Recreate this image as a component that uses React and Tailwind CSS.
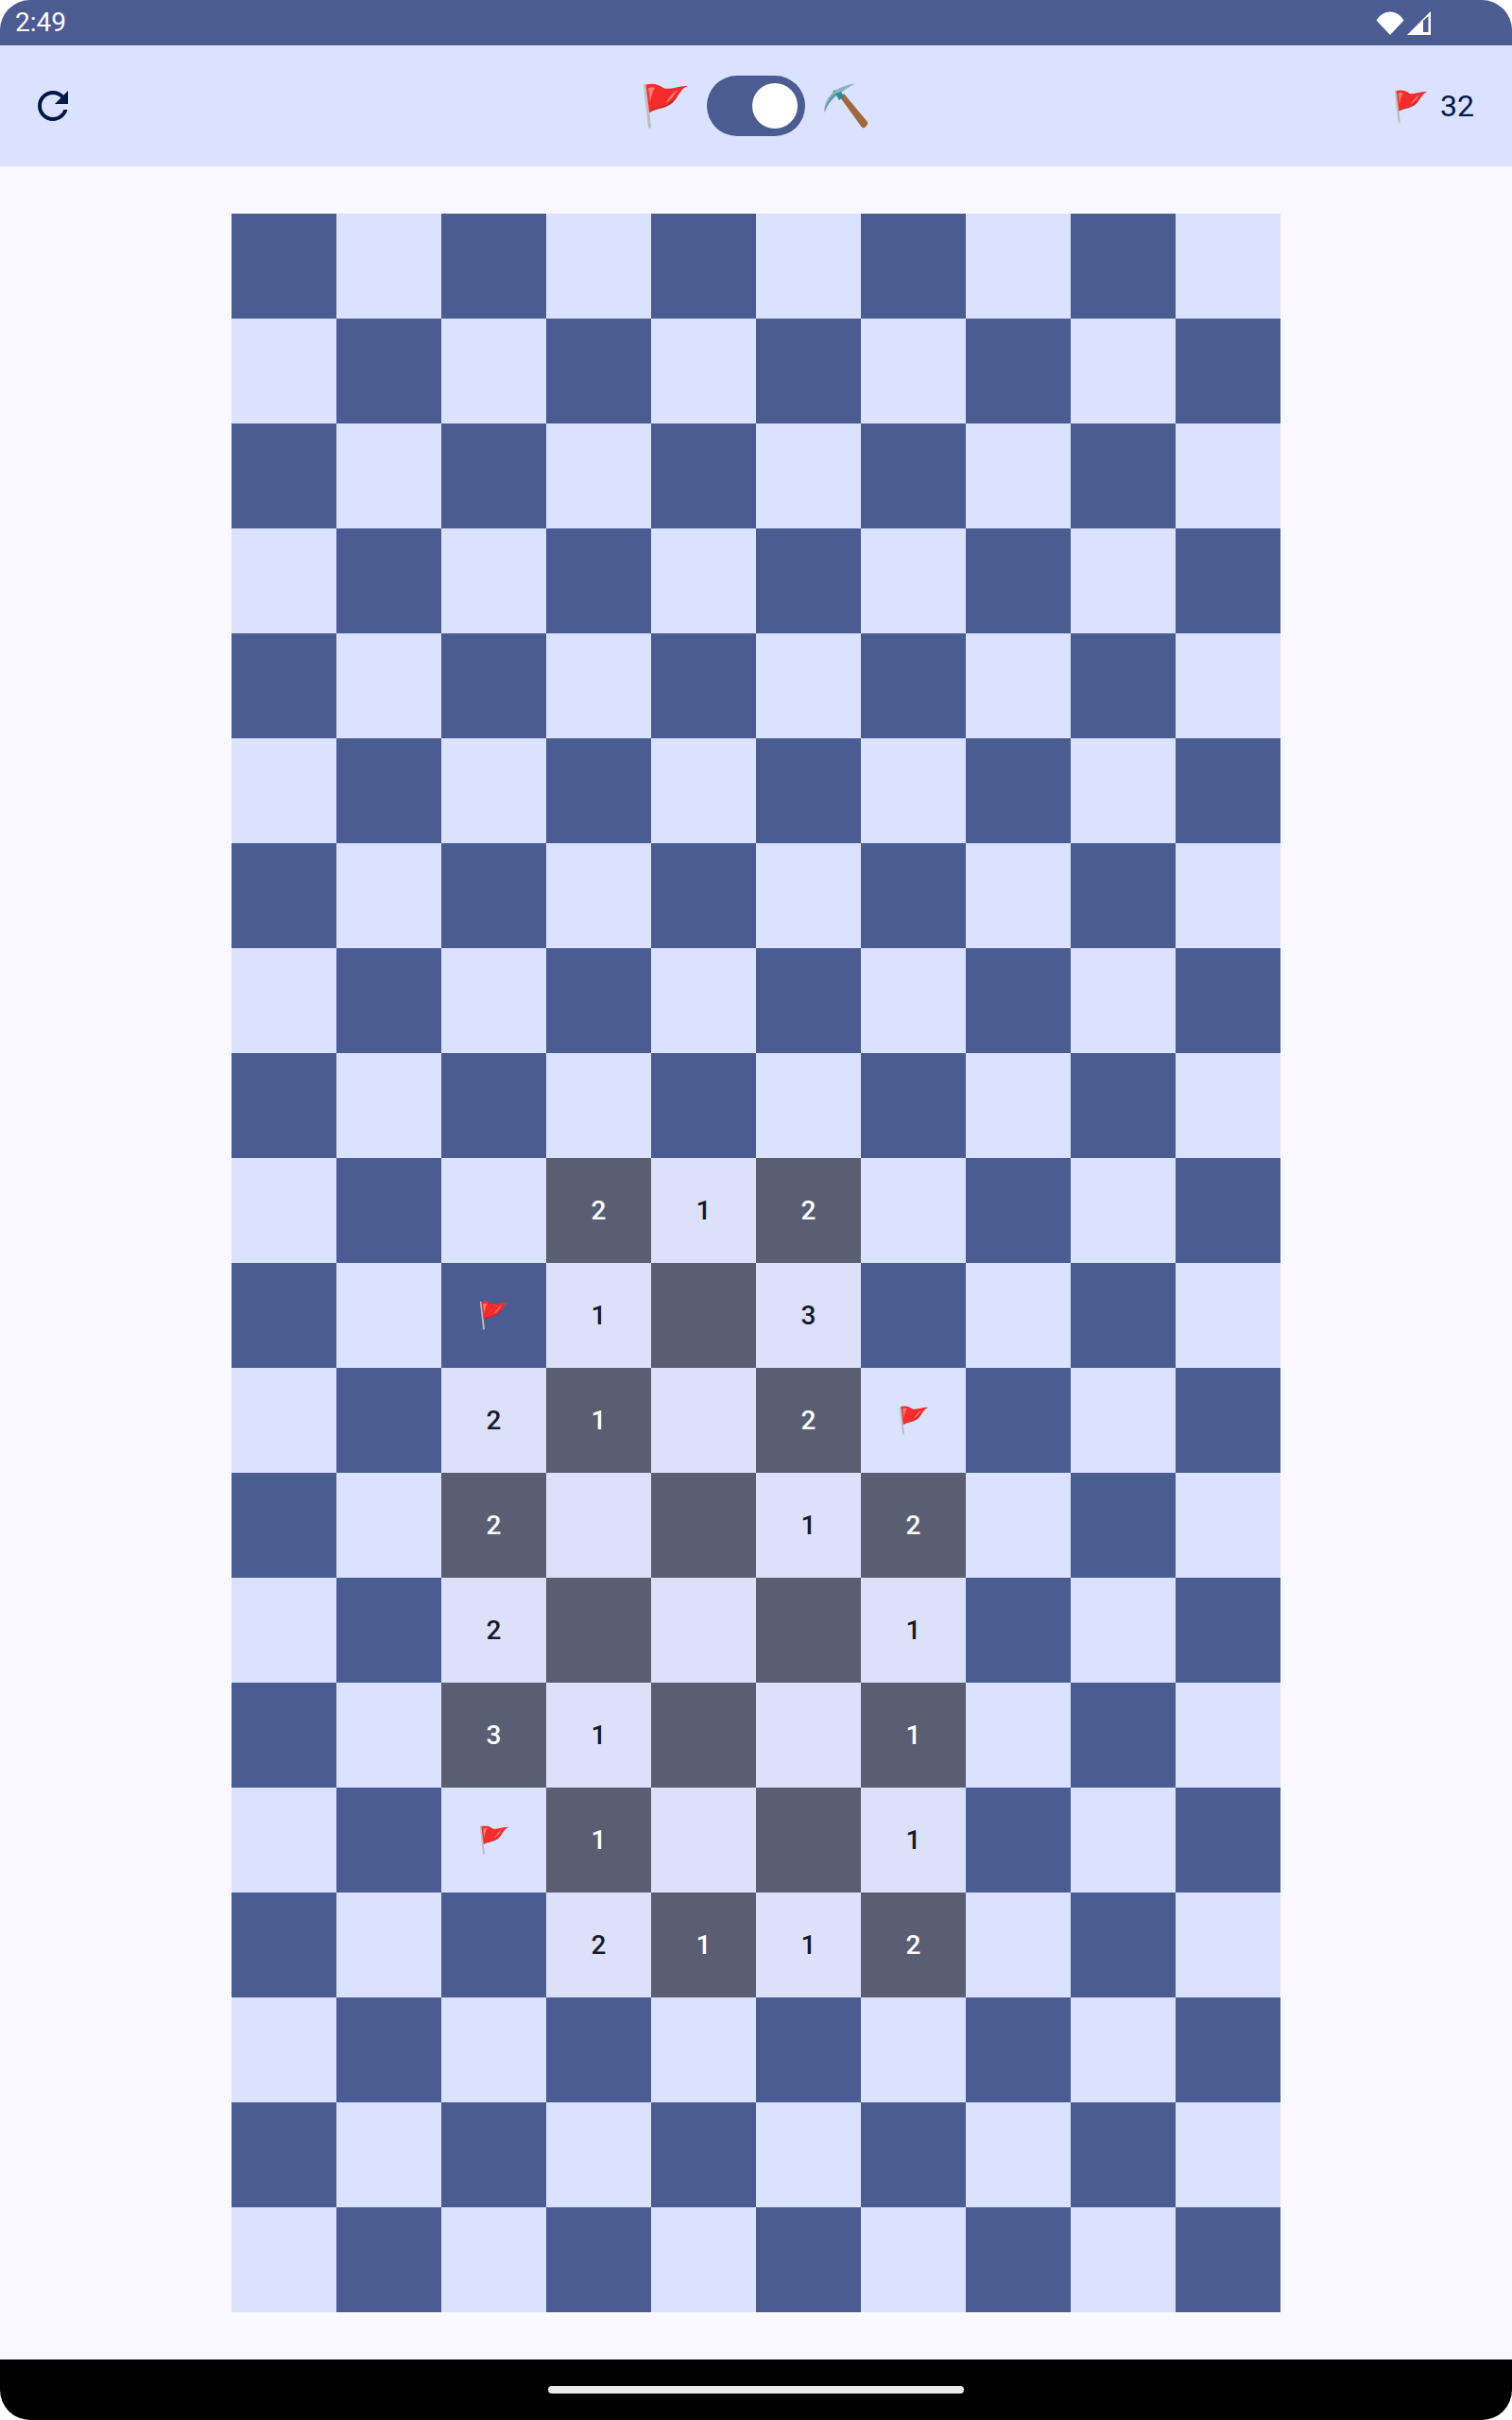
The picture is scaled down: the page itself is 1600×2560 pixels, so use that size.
import { useState } from "react";

const revealed = {
  "9,3": "2", "9,4": "1", "9,5": "2",
  "10,3": "1", "10,4": "", "10,5": "3",
  "11,2": "2", "11,3": "1", "11,4": "", "11,5": "2",
  "12,2": "2", "12,3": "", "12,4": "", "12,5": "1", "12,6": "2",
  "13,2": "2", "13,3": "", "13,4": "", "13,5": "", "13,6": "1",
  "14,2": "3", "14,3": "1", "14,4": "", "14,5": "", "14,6": "1",
  "15,3": "1", "15,4": "", "15,5": "", "15,6": "1",
  "16,3": "2", "16,4": "1", "16,5": "1", "16,6": "2",
};
const flags = ["10,2", "11,6", "15,2"];

function FlagIcon({ className }) {
  return (
    <svg viewBox="0 0 49 48" className={className}>
      <path d="M1 1.5 L4 1 L9 47 Q7.5 48 6 47 Z" fill="#bdbdbd" />
      <path d="M3.5 1.5 C12 -0.5 17 1.5 22 5 C29 8 38 2 48 3 C43 4.5 40 9 37 14 C33 21 25 24 18 25.5 C14 26.5 10 27.5 7 30 Z" fill="#f52c2c" />
      <path d="M7 29.5 C10 27 14 26 18 25 C25 23.5 32 20 36 13 C34 22 25 25.5 18 27 C14 28 10 29 7.5 31 Z" fill="#c62828" />
      <path d="M6 5 C9 4 11 4 13 5 C10 9 9 15 8 21 Z" fill="#ff7a7a" />
      <path d="M24 21 C28 16 31 11 37 7 C33 13 30 18 24 21 Z" fill="#ff8a80" />
    </svg>
  );
}

function PickIcon({ className }) {
  return (
    <svg viewBox="0 0 47 48" className={className}>
      <path d="M17 15 L21 11 L46 41 Q47 43 45 45 L43 47 Q41 48 39.5 46 Z" fill="#a1683e" />
      <path d="M9 9 Q11 6.5 13.5 7.5 L15 11 L11 12 Z" fill="#a1683e" />
      <path d="M0.5 31 C-1 18 10 3 33 0.5 C27 4 21 7 17 11 L12 13.5 C6 18 3 24 0.5 31 Z" fill="#86b4c2" />
      <path d="M0.5 31 C2 22 6 15 12 10.5 L13 13 C7 18 3 24 0.5 31 Z" fill="#5f98a8" />
      <path d="M12 11 L18 9 L21 14 L16 18 Z" fill="#2f8a99" />
    </svg>
  );
}

function Cell({ row, col }) {
  const key = row + "," + col;
  const dark = (row + col) % 2 === 0;
  if (key in revealed) {
    return (
      <div className={`flex h-[111px] w-[111px] items-center justify-center text-[28px] font-medium ${dark ? "bg-[#595e72] text-white" : "bg-[#dce1f9] text-[#151b2c]"}`}>
        {revealed[key]}
      </div>
    );
  }
  return (
    <div className={`flex h-[111px] w-[111px] items-center justify-center ${dark ? "bg-[#4a5c92]" : "bg-[#dae2ff]"}`}>
      {flags.includes(key) && <FlagIcon className="h-[31px] w-[32px]" />}
    </div>
  );
}

export default function App() {
  const [mining, setMining] = useState(true);
  const rows = Array.from({ length: 20 }, (_, i) => i);
  const cols = Array.from({ length: 10 }, (_, i) => i);

  return (
    <div className="h-[2560px] w-[1600px] bg-white [font-family:Roboto,sans-serif]">
      <div className="flex h-full flex-col overflow-hidden rounded-[32px] bg-[#faf8ff]">
        {/* Status bar */}
        <div className="flex h-12 items-center justify-between bg-[#4a5c92] pl-4 pr-[86px] text-[28px] text-white">
          <span>2:49</span>
          <div className="flex items-center gap-[3px]">
            <svg viewBox="0 0 30 25" className="h-[25px] w-[30px]">
              <path d="M0.5 9.5 C8 -2.5 22 -2.5 29.5 9.5 L15 25 Z" fill="#fff" />
            </svg>
            <svg viewBox="0 0 25 25" className="h-[25px] w-[25px]">
              <path d="M25 0 V25 H0 Z" fill="#fff" />
              <polygon points="17,10 22.5,5 22.5,22 17,22" fill="#4a5c92" />
            </svg>
          </div>
        </div>

        {/* Toolbar */}
        <div className="grid h-32 grid-cols-[1fr_auto_1fr] items-center bg-[#dae2ff] px-10 text-[#00174b]">
          <button className="-ml-2 h-12 w-12">
            <svg viewBox="0 0 24 24" className="h-12 w-12" fill="currentColor">
              <path d="M17.65 6.35C16.2 4.9 14.21 4 12 4c-4.42 0-7.99 3.58-7.99 8s3.57 8 7.99 8c3.73 0 6.84-2.55 7.73-6h-2.08c-.82 2.33-3.04 4-5.65 4-3.31 0-6-2.69-6-6s2.69-6 6-6c1.66 0 3.14.69 4.22 1.78L13 11h7V4l-2.35 2.35z" />
            </svg>
          </button>
          <div className="flex items-center pr-px">
            <FlagIcon className="h-12 w-[49px]" />
            <button
              onClick={() => setMining(!mining)}
              className={`ml-[19px] mr-5 flex h-16 w-[104px] items-center rounded-full bg-[#4a5c92] px-2 ${mining ? "justify-end" : "justify-start"}`}
            >
              <span className="h-12 w-12 rounded-full bg-white" />
            </button>
            <PickIcon className="h-12 w-[47px]" />
          </div>
          <div className="flex items-center justify-end gap-[13px] text-[32px]">
            <FlagIcon className="h-[35px] w-[36px]" />
            <span>32</span>
          </div>
        </div>

        {/* Board */}
        <div className="flex flex-1 items-center justify-center">
          <div className="grid w-[1110px] grid-cols-10">
            {rows.map((r) => cols.map((c) => <Cell key={r + "-" + c} row={r} col={c} />))}
          </div>
        </div>

        {/* Nav bar */}
        <div className="flex h-16 items-start justify-center bg-black pt-7">
          <div className="h-2 w-[440px] rounded-full bg-[#ebebeb]" />
        </div>
      </div>
    </div>
  );
}
